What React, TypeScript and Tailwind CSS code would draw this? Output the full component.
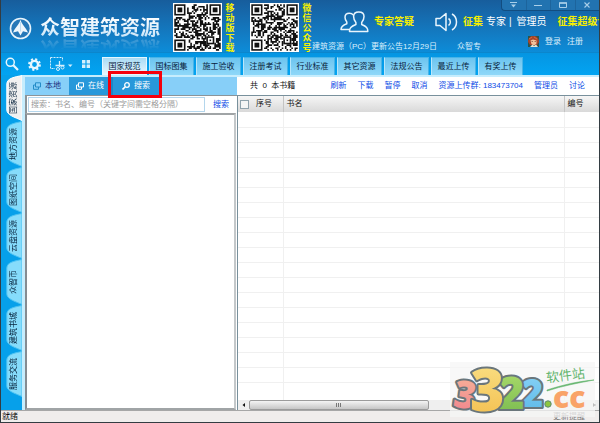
import React, { useState } from 'react';

const TOP_TABS = ['国家规范', '国标图集', '施工验收', '注册考试', '行业标准', '其它资源', '法规公告', '最近上传', '有奖上传'];
const SIDE_TABS = ['国家资源', '地方资源', '图纸空间', '云盘资源', '众智币', '建筑书城', '服务交流'];
const ROWS = Array.from({ length: 18 }, (_, i) => i);

const QR_SIZE = 29;

const isFinder = (x: number, y: number) => {
  const last = QR_SIZE - 8;
  return (x < 8 && y < 8) || (x >= last && y < 8) || (x < 8 && y >= last);
};

const qrPath = (seed: number) => {
  let state = seed;
  let d = '';
  for (let y = 0; y < QR_SIZE; y++) {
    for (let x = 0; x < QR_SIZE; x++) {
      state = (state * 1103515245 + 12345) % 2147483648;
      const inAlign = x >= 20 && x <= 24 && y >= 20 && y <= 24;
      if (!isFinder(x, y) && !inAlign && (state >> 12) % 100 < 52) {
        d += `M${x} ${y}h1v1h-1z`;
      }
    }
  }
  return d;
};

const QrCode: React.FC<{ seed: number; label: string }> = ({ seed, label }) => (
  <svg className="w-[49px] h-[49px] shrink-0 bg-white" viewBox="-0.8 -0.8 30.6 30.6" role="img" aria-label={label}>
    <path d={qrPath(seed)} fill="#111" />
    {[[0, 0], [22, 0], [0, 22]].map(([x, y]) => (
      <g key={`${x}-${y}`}>
        <rect x={x + 0.5} y={y + 0.5} width="6" height="6" fill="#fff" stroke="#111" />
        <rect x={x + 2} y={y + 2} width="3" height="3" fill="#111" />
      </g>
    ))}
    <rect x="20.5" y="20.5" width="4" height="4" fill="#fff" stroke="#111" />
    <rect x="22" y="22" width="1" height="1" fill="#111" />
  </svg>
);

const QrBlock: React.FC<{ seed: number; label: string }> = ({ seed, label }) => (
  <div className="flex shrink-0 items-start gap-[3px]">
    <QrCode seed={seed} label={label} />
    <span className="w-[10px] text-center text-[9px] leading-[10px] font-bold text-[#f5f000] break-all">{label}</span>
  </div>
);

const Logo = () => (
  <div className="flex w-[164px] shrink-0 items-center gap-2 pt-1">
    <svg className="w-[23px] h-[23px] shrink-0" viewBox="0 0 23 23" aria-hidden="true">
      <circle cx="11.5" cy="11.5" r="10" fill="#2678b8" stroke="#e8f4fc" strokeWidth="1.6" />
      <path d="M11.5 2.5C12.5 7 16.5 10 19 15.5L14 14.3 11.5 18.5 9 14.3 4 15.5C6.5 10 10.5 7 11.5 2.5Z" fill="#eef7fd" />
      <path d="M11.5 5V14.5" stroke="#a9cfe9" strokeWidth="0.7" />
    </svg>
    <h1 className="bg-linear-to-b from-white to-[#c3e2f7] bg-clip-text text-[20px] leading-[23px] font-bold whitespace-nowrap text-transparent [-webkit-box-reflect:below_-4px_linear-gradient(transparent_40%,rgba(0,0,0,0.35))]">
      众智建筑资源
    </h1>
  </div>
);

const WindowControls = () => (
  <div className="flex h-[11px] w-[98px] shrink-0 self-end rounded-bl border-b border-l border-[#124d80] bg-[#2273b0]">
    <button aria-label="菜单" className="flex flex-1 items-center justify-center border-r border-[#1d649c]">
      <svg className="w-[7px] h-[6px]" viewBox="0 0 7 6"><path d="M0 .5H7" stroke="#a9cfe9" /><path d="M1 2.5H6L3.5 5.5Z" fill="#a9cfe9" /></svg>
    </button>
    <button aria-label="最小化" className="flex flex-1 items-center justify-center border-r border-[#1d649c]">
      <svg className="w-2 h-[6px]" viewBox="0 0 8 6"><path d="M0 3.5H8" stroke="#a9cfe9" /></svg>
    </button>
    <button aria-label="最大化" className="flex flex-1 items-center justify-center border-r border-[#1d649c]">
      <svg className="w-2 h-[6px]" viewBox="0 0 8 6"><path d="M.5 1H7.5V5.5H.5Z" fill="none" stroke="#a9cfe9" /><path d="M0 1H8" stroke="#a9cfe9" strokeWidth="1.5" /></svg>
    </button>
    <button aria-label="关闭" className="flex flex-1 items-center justify-center">
      <svg className="w-[6px] h-[6px]" viewBox="0 0 6 6"><path d="M.5 .5L5.5 5.5M5.5 .5L.5 5.5" stroke="#a9cfe9" strokeWidth="1.1" /></svg>
    </button>
  </div>
);

const Avatar = () => (
  <svg className="w-[11px] h-[11px]" viewBox="0 0 11 11" aria-hidden="true">
    <rect width="11" height="11" fill="#2d5348" />
    <path d="M0 6C0 1 3 0 6 0S11 3 11 6L9 9H2Z" fill="#a8452a" />
    <path d="M2.5 4.5L5 3.5 8.5 4.5V7.5L6 9.5 3.5 8Z" fill="#f2c19a" />
    <path d="M3.7 5.5H4.7M6.7 5.5H7.7" stroke="#5a3020" strokeWidth="0.8" />
    <path d="M2 11L4.5 8.5 6 10 8 8.5 10 11Z" fill="#e8e2d0" />
    <path d="M1 3L4 1M6 1L9 3" stroke="#d76a3c" />
  </svg>
);

const Header = () => (
  <header className="flex h-[53px] overflow-hidden bg-linear-to-b from-[#175d9c] to-[#0c8cd8] border-b border-[#0b86cc]">
    <div className="flex shrink-0 pl-2">
      <Logo />
      <div className="flex gap-[15px] pt-[3px]">
        <QrBlock seed={3322} label="移动版下载" />
        <QrBlock seed={7351} label="微信公众号" />
      </div>
    </div>
    <div className="flex min-w-0 flex-1 flex-col">
      <WindowControls />
      <div className="flex h-[22px] items-center overflow-hidden pl-[28px] text-[10px] leading-[14px] whitespace-nowrap">
        <svg className="w-[29px] h-[22px] shrink-0" viewBox="0 0 29 22" fill="none" stroke="#e9f5fd" strokeWidth="1.5" strokeLinejoin="round" aria-hidden="true">
          <path d="M9.5 20.5H27.8C28 17 26.5 15.5 21.7 13.5V11.5C23.5 9.5 24 8 24 5.5 24 2.5 22 1 18.8 1S13.6 2.5 13.6 5.5C13.6 8 14.2 9.5 15.9 11.5V13.5C11 15.5 9.3 17 9.5 20.5Z" />
          <path d="M9.2 18.5H1C1 15.5 2.5 14.3 6.8 12.8V11C5.5 9.5 5 8.5 5 6.3 5 3.5 6.8 2.2 9.3 2.2 10.8 2.2 12.3 2.7 13.2 4" />
        </svg>
        <a href="#" className="ml-[5px] font-bold text-[#f7ef00]">专家答疑</a>
        <svg className="ml-[21px] w-[23px] h-[20px] shrink-0" viewBox="0 0 23 20" fill="none" stroke="#e9f5fd" strokeWidth="1.5" strokeLinejoin="round" aria-hidden="true">
          <path d="M1 6.5H5L11 1.5V18.5L5 13.5H1Z" />
          <path d="M13.5 6.5C16 8 16 12 13.5 13.5M17 2C23 5.5 23 14.5 17 18" />
        </svg>
        <a href="#" className="ml-[5px] font-bold text-[#f7ef00]">征集</a>
        <a href="#" className="ml-[3px] text-white">专家</a>
        <span className="mx-[3px] text-white">|</span>
        <a href="#" className="ml-[2px] text-white">管理员</a>
        <a href="#" className="ml-[11px] font-bold text-[#f7ef00]">征集超级专家</a>
      </div>
      <div className="flex justify-between pr-4 text-[8px] leading-[11px] whitespace-nowrap text-[#dcf0fc]">
        <p className="mt-2 flex gap-5">
          <span>建筑资源（PC）更新公告12月29日</span>
          <span>众智专</span>
        </p>
        <div className="mt-[3px] flex items-start gap-[6px]">
          <Avatar />
          <a href="#">登录</a>
          <a href="#">注册</a>
        </div>
      </div>
    </div>
  </header>
);

const Toolbar: React.FC<{ active: string; onSelect: (tab: string) => void }> = ({ active, onSelect }) => (
  <div className="flex h-[22px] items-end bg-linear-to-b from-[#0595e2] to-[#02a4f2]">
    <div className="flex w-[101px] shrink-0 items-center gap-[9px] self-center pl-1">
      <button aria-label="搜索">
        <svg className="block w-[14px] h-[14px]" viewBox="0 0 14 14" fill="none" stroke="#e6f6fe"><circle cx="5.3" cy="5.3" r="4" strokeWidth="1.5" /><path d="M8.3 8.3L13 13" strokeWidth="2.2" /></svg>
      </button>
      <button aria-label="设置">
        <svg className="block w-[13px] h-[13px]" viewBox="0 0 13 13" fill="none" stroke="#e6f6fe">
          <circle cx="6.5" cy="6.5" r="3.6" strokeWidth="2.4" />
          <circle cx="6.5" cy="6.5" r="5.4" strokeWidth="2" strokeDasharray="2.12 2.12" />
        </svg>
      </button>
      <button aria-label="截图">
        <svg className="block w-[23px] h-[15px]" viewBox="0 0 23 15" fill="none" stroke="#d5effd">
          <path d="M.5 .5H12.5V4M.5 .5V11.5H5" strokeDasharray="2 1" />
          <path d="M9.5 4V10M5.5 8.5H14.5" strokeWidth="1.3" />
          <circle cx="8" cy="12" r="1.5" /><circle cx="12.5" cy="10.5" r="1.5" />
          <path d="M18 7.5H22.5L20.25 10Z" fill="#d5effd" stroke="none" />
        </svg>
      </button>
      <button aria-label="全部">
        <svg className="block w-2 h-2" viewBox="0 0 8 8" fill="#d5effd"><path d="M0 0H3.4V3.4H0ZM4.6 0H8V3.4H4.6ZM0 4.6H3.4V8H0ZM4.6 4.6H8V8H4.6Z" /></svg>
      </button>
    </div>
    <nav className="flex gap-[2px]">
      {TOP_TABS.map((tab) => (
        <button
          key={tab}
          onClick={() => onSelect(tab)}
          className={`h-[18px] w-[45px] border border-b-0 text-[8px] leading-4 whitespace-nowrap text-[#06213a] ${
            tab === active
              ? 'border-[#e3f6ff] bg-linear-to-b from-[#a9dbf5] to-[#e9f8ff]'
              : 'border-[#47b4e8] border-l-[#b8e6fb] bg-linear-to-b from-[#6cc4ef] to-[#8fd8f9]'
          }`}
        >
          {tab}
        </button>
      ))}
    </nav>
  </div>
);

const SideBar: React.FC<{ active: string; onSelect: (tab: string) => void }> = ({ active, onSelect }) => (
  <nav className="flex w-[24px] shrink-0 flex-col bg-[#06a0ea] border-r-[3px] border-[#c6edfd] pl-[5px]">
    {SIDE_TABS.map((tab) => (
      <button key={tab} onClick={() => onSelect(tab)} className="relative flex h-[46px] w-4 items-center justify-center">
        <svg className="absolute inset-0 w-full h-full" viewBox="0 0 16 46" preserveAspectRatio="none" aria-hidden="true">
          <path
            d="M16 .5C9 2 1 3 .8 9V35C1 40 8 42 16 45.5Z"
            fill={tab === active ? '#f1f1f1' : '#86dcfb'}
            stroke={tab === active ? '#ffffff' : '#4cc3f3'}
            strokeWidth="1"
          />
        </svg>
        <span className="relative rotate-180 text-[8px] leading-[10px] whitespace-nowrap text-[#06213a] [text-orientation:sideways] [writing-mode:vertical-rl]">
          {tab}
        </span>
      </button>
    ))}
  </nav>
);

const WindowsIcon = () => (
  <svg className="w-2 h-2" viewBox="0 0 8 8" fill="none" stroke="currentColor" aria-hidden="true">
    <path d="M2.5 .8H7.5V5H2.5ZM2.5 3H.5V7.3H5.5V5" />
  </svg>
);

const LeftPanel = () => (
  <section className="flex w-[212px] shrink-0 flex-col bg-white">
    <div className="flex h-[18px] items-stretch bg-[#87cff8] text-[8px]">
      <button className="flex w-[44px] items-center justify-center gap-1 text-[#1c2f80]">
        <span className="text-[#248cc8]"><WindowsIcon /></span>本地
      </button>
      <button className="flex w-[42px] items-center justify-center gap-1 bg-[#2898da] text-white"><WindowsIcon />在线</button>
      <div className="relative flex w-[48px] bg-[#2898da]">
        <button className="flex flex-1 items-center justify-center gap-1 border-l-2 border-[#1b87c8] text-white">
          <svg className="w-2 h-2" viewBox="0 0 8 8" fill="none" stroke="currentColor" aria-hidden="true"><circle cx="5" cy="3" r="2.3" strokeWidth="1.3" /><path d="M3.3 4.7L.5 7.5" strokeWidth="1.6" /></svg>
          搜索
        </button>
        <span className="pointer-events-none absolute -inset-x-[3px] -top-[6px] -bottom-[3px] z-10 border-3 border-[#f5000b]" />
      </div>
    </div>
    <div className="flex h-[18px] items-center border-t border-l-2 border-[#8b9499] bg-white pl-px text-[8px]">
      <input
        type="text"
        aria-label="关键字"
        placeholder="搜索：书名、编号（关键字间需空格分隔）"
        className="h-[15px] w-[177px] border border-[#b4d6ec] px-[2px] leading-[12px] outline-none placeholder:text-[#9a9a9a]"
      />
      <button className="flex-1 text-[#0b4ae6]">搜索</button>
    </div>
    <div className="mr-px flex-1 border-2 border-r-[#c4c8ca] border-b-[#a0a4a6] border-l-[#858c92] border-t-[#a0a4a6]" />
  </section>
);

const BookTable = () => (
  <div className="flex-1 border-t border-l border-[#78909c]">
    <table className="h-full w-full table-fixed border-collapse text-left text-[8px] leading-[10px] text-[#111]">
      <thead>
        <tr className="h-4 bg-linear-to-b from-[#f6f6f6] to-[#d9d9d9]">
          <th className="w-[45px] border-r border-[#c4c4c4] p-0 font-normal">
            <label className="flex items-center gap-[7px] pl-[2px]">
              <input type="checkbox" className="size-[9px] appearance-none border border-[#8fa3ad] bg-[#f4f6f6]" />
              序号
            </label>
          </th>
          <th className="border-r border-[#c4c4c4] p-0 pl-[3px] font-normal">书名</th>
          <th className="w-[35px] p-0 pl-[3px] font-normal">编号</th>
        </tr>
      </thead>
      <tbody>
        {ROWS.map((row) => (
          <tr key={row} className="h-[15px] border-b border-[#f0f0f0]">
            <td className="border-r border-[#f0f0f0] p-0" />
            <td className="border-r border-[#f0f0f0] p-0" />
            <td className="p-0" />
          </tr>
        ))}
        <tr>
          <td className="border-r border-[#f0f0f0] p-0" />
          <td className="border-r border-[#f0f0f0] p-0" />
          <td className="p-0" />
        </tr>
      </tbody>
    </table>
  </div>
);

const ScrollBar = () => (
  <div className="flex h-[10px] shrink-0 items-stretch border-l border-[#78909c] bg-[#efefef]">
    <button aria-label="向左" className="flex w-[11px] items-center justify-center">
      <svg className="w-1 h-1" viewBox="0 0 4 4"><path d="M3 0V4L.5 2Z" fill="#111" /></svg>
    </button>
    <div className="flex-1">
      <div className="flex h-full w-[53%] items-center justify-center rounded-xs border border-[#9b9b9b] bg-linear-to-b from-[#f4f4f4] to-[#c6c6c6]">
        <svg className="w-[6px] h-1" viewBox="0 0 6 4"><path d="M.5 0V4M2.5 0V4M4.5 0V4" stroke="#777" /></svg>
      </div>
    </div>
    <button aria-label="向右" className="flex w-[11px] items-center justify-center">
      <svg className="w-1 h-1" viewBox="0 0 4 4"><path d="M1 0V4L3.5 2Z" fill="#111" /></svg>
    </button>
  </div>
);

const RightPanel = () => (
  <section className="flex min-w-0 flex-1 flex-col bg-white">
    <div className="flex h-[18px] items-center pl-[13px] pr-[14px] text-[8px] whitespace-nowrap">
      <span className="text-[#111]">共&nbsp; 0 &nbsp;本书籍</span>
      <div className="ml-auto flex gap-[11px] text-[#0b4ae6]">
        <a href="#">刷新</a>
        <a href="#">下载</a>
        <a href="#">暂停</a>
        <a href="#">取消</a>
        <a href="#">资源上传群: 183473704</a>
        <a href="#">管理员</a>
        <a href="#">讨论</a>
      </div>
    </div>
    <BookTable />
    <ScrollBar />
  </section>
);

const NUMERAL_FONT = '"Open Sans", "Noto Sans", sans-serif';

const SiteMark = () => (
  <svg className="pointer-events-none absolute right-1 bottom-[5px] w-[145px] h-[55px] overflow-visible" viewBox="0 0 145 55" aria-hidden="true">
    <defs>
      <linearGradient id="pink" x1="0" y1="0" x2="0" y2="1"><stop offset="0" stopColor="#f7b99a" /><stop offset="1" stopColor="#f0808c" /></linearGradient>
      <linearGradient id="gold" x1="0" y1="0" x2="0" y2="1"><stop offset="0" stopColor="#fbe68f" /><stop offset="1" stopColor="#f2bb48" /></linearGradient>
      <linearGradient id="lime" x1="0" y1="0" x2="0" y2="1"><stop offset="0" stopColor="#b4e070" /><stop offset="1" stopColor="#74b84c" /></linearGradient>
      <linearGradient id="aqua" x1="0" y1="0" x2="0" y2="1"><stop offset="0" stopColor="#8fd6f8" /><stop offset="1" stopColor="#58b6e6" /></linearGradient>
    </defs>
    <rect width="145" height="55" fill="#f5f5f5" opacity="0.75" />
    <g fontFamily={NUMERAL_FONT} fontWeight="800" stroke="#6a767b" strokeWidth="4" strokeLinejoin="round" paintOrder="stroke">
      <text x="71" y="45" fontSize="38" fill="url(#aqua)">2</text>
      <text x="48" y="47" fontSize="45" fill="url(#lime)">2</text>
      <text x="4" y="46" fontSize="38" fill="url(#pink)" transform="rotate(8 14 32)">3</text>
      <text x="20" y="49" fontSize="59" fill="url(#gold)">3</text>
    </g>
    <circle cx="98" cy="42" r="3.2" fill="#8cc63f" stroke="#5d8a70" />
    <text x="103" y="46" fontFamily={NUMERAL_FONT} fontWeight="800" fontSize="30" fill="#f9a368">cc</text>
    <g transform="rotate(-7 116 14)">
      <text x="96" y="18" fontFamily='"Noto Sans CJK SC", sans-serif' fontSize="13" fill="#62b46c">软件站</text>
    </g>
    <path d="M97 28C112 23 130 19 144 18C128 21 112 24 97 29Z" fill="#62b46c" stroke="#62b46c" strokeWidth="0.6" />
  </svg>
);

export default function App() {
  const [topTab, setTopTab] = useState(TOP_TABS[0]);
  const [sideTab, setSideTab] = useState(SIDE_TABS[0]);

  return (
    <div className="relative flex min-h-screen flex-col overflow-hidden border border-t-0 border-[#333c42] bg-[#06a0ea] font-['Liberation_Sans','Noto_Sans_CJK_SC',sans-serif]">
      <Header />
      <Toolbar active={topTab} onSelect={setTopTab} />
      <main className="flex flex-1">
        <SideBar active={sideTab} onSelect={setSideTab} />
        <div className="flex min-w-0 flex-1 flex-col border-t-2 border-[#c6edfd]">
          <div className="flex min-w-0 flex-1">
            <LeftPanel />
            <RightPanel />
          </div>
        </div>
      </main>
      <footer className="flex h-3 shrink-0 items-center justify-between border-t border-[#a7a7a7] bg-[#f0edec] pr-[14px] pl-px text-[8px] leading-[10px]">
        <span className="text-[#111]">就绪</span>
        <span className="text-[#777]">更新提醒</span>
      </footer>
      <SiteMark />
    </div>
  );
}
